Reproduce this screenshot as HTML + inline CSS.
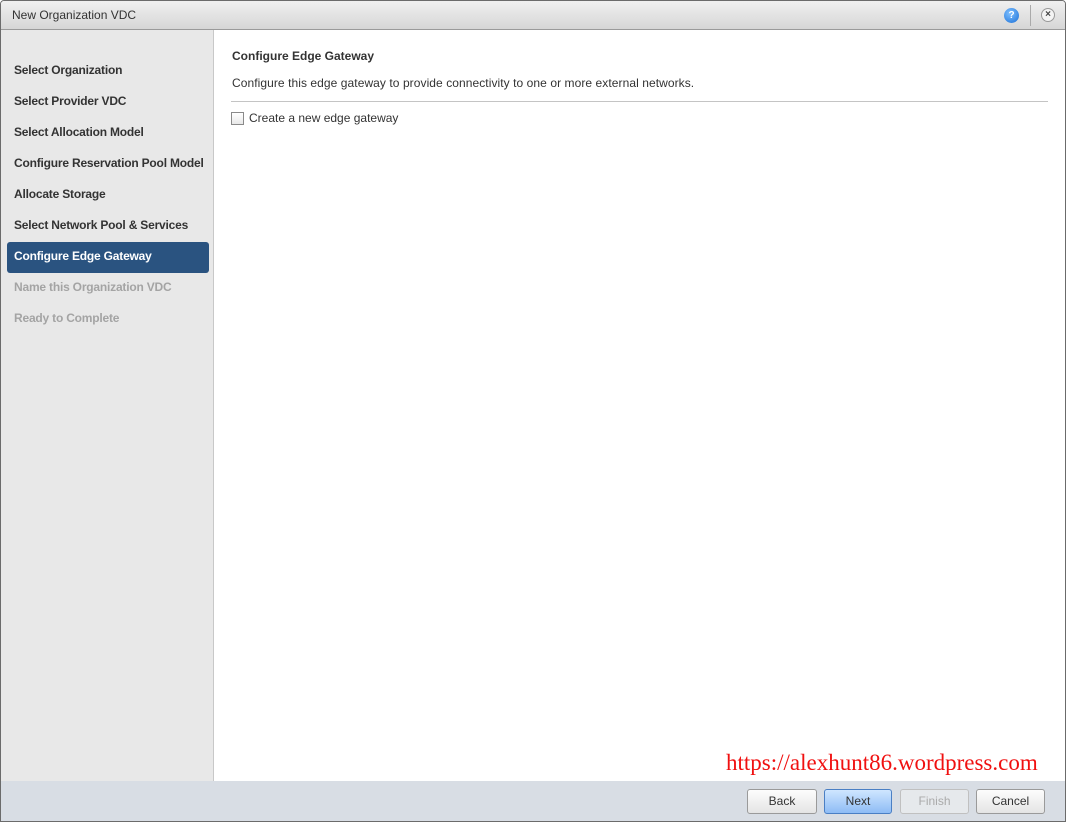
<!DOCTYPE html>
<html><head><style>
*{margin:0;padding:0;box-sizing:border-box}
body{width:1066px;height:822px;overflow:hidden;font-family:"Liberation Sans",Arial,sans-serif;background:#fff;position:relative}
.frame{position:absolute;left:0;top:0;width:1066px;height:822px;border:1px solid #6b6b6b;border-radius:4px 4px 0 0;overflow:hidden;background:#fff}
.title{position:absolute;left:0;top:0;width:1064px;height:29px;background:linear-gradient(#f0f0f0,#d6d6d6);border-bottom:1px solid #9a9a9a;font-size:12px;color:#333;padding:7px 0 0 11px}
.side{position:absolute;left:0;top:29px;width:213px;height:751px;background:#e8e8e8;border-right:1px solid #c8c8c8}
.item{position:absolute;left:13px;font-size:12px;font-weight:bold;color:#333;letter-spacing:-0.2px}
.item.dis{color:#a4a4a4}
.sel{position:absolute;left:6px;top:212px;width:202px;height:31px;background:#2a5380;border-radius:3px}
.foot{position:absolute;left:0;top:780px;width:1064px;height:42px;background:#d8dde4}
.btn{position:absolute;top:8px;height:25px;border:1px solid #9a9a9a;border-radius:3px;background:linear-gradient(#fdfdfd,#e4e4e4);font-size:12px;color:#333;text-align:center;line-height:23px}
</style></head><body>
<div class="frame">
<div class="title">New Organization VDC
<div style="position:absolute;left:1003px;top:7px;width:15px;height:15px;border-radius:50%;background:radial-gradient(circle at 40% 35%,#7fc0ff,#1a6fd6);color:#fff;font-size:10px;font-weight:bold;text-align:center;line-height:15px">?</div>
<div style="position:absolute;left:1029px;top:4px;width:1px;height:21px;background:#aaa"></div>
<div style="position:absolute;left:1040px;top:7px;width:14px;height:14px;border-radius:50%;border:1px solid #999;background:#f4f4f4;color:#444;font-size:10px;font-weight:bold;text-align:center;line-height:12px">×</div>
</div>
<div class="side">
<div class="sel"></div>
<div class="item" style="top:33px">Select Organization</div>
<div class="item" style="top:64px">Select Provider VDC</div>
<div class="item" style="top:95px">Select Allocation Model</div>
<div class="item" style="top:126px">Configure Reservation Pool Model</div>
<div class="item" style="top:157px">Allocate Storage</div>
<div class="item" style="top:188px">Select Network Pool &amp; Services</div>
<div class="item" style="top:219px;color:#fff">Configure Edge Gateway</div>
<div class="item dis" style="top:250px">Name this Organization VDC</div>
<div class="item dis" style="top:281px">Ready to Complete</div>
</div>
<div style="position:absolute;left:231px;top:48px;font-size:12px;font-weight:bold;color:#333">Configure Edge Gateway</div>
<div style="position:absolute;left:231px;top:75px;font-size:12px;color:#333;letter-spacing:0.07px">Configure this edge gateway to provide connectivity to one or more external networks.</div>
<div style="position:absolute;left:230px;top:100px;width:817px;height:1px;background:#c4c4c4"></div>
<div style="position:absolute;left:230px;top:111px;width:13px;height:13px;border:1px solid #8a8a8a;background:linear-gradient(#fff,#e8e8e8)"></div>
<div style="position:absolute;left:248px;top:110px;font-size:12px;color:#333">Create a new edge gateway</div>
<div style="position:absolute;left:725px;top:749px;font-family:'Liberation Serif',serif;font-size:23px;color:#f01010;white-space:nowrap">https://alexhunt86.wordpress.com</div>
<div class="foot">
<div class="btn" style="left:746px;width:70px">Back</div>
<div class="btn" style="left:823px;width:68px;border-color:#4a7fc4;background:linear-gradient(#cfe6ff,#8ebcf5)">Next</div>
<div class="btn" style="left:899px;width:69px;border-color:#c0c0c0;color:#aaa;background:#e6e9ec">Finish</div>
<div class="btn" style="left:975px;width:69px">Cancel</div>
</div>
</div>
</body></html>
